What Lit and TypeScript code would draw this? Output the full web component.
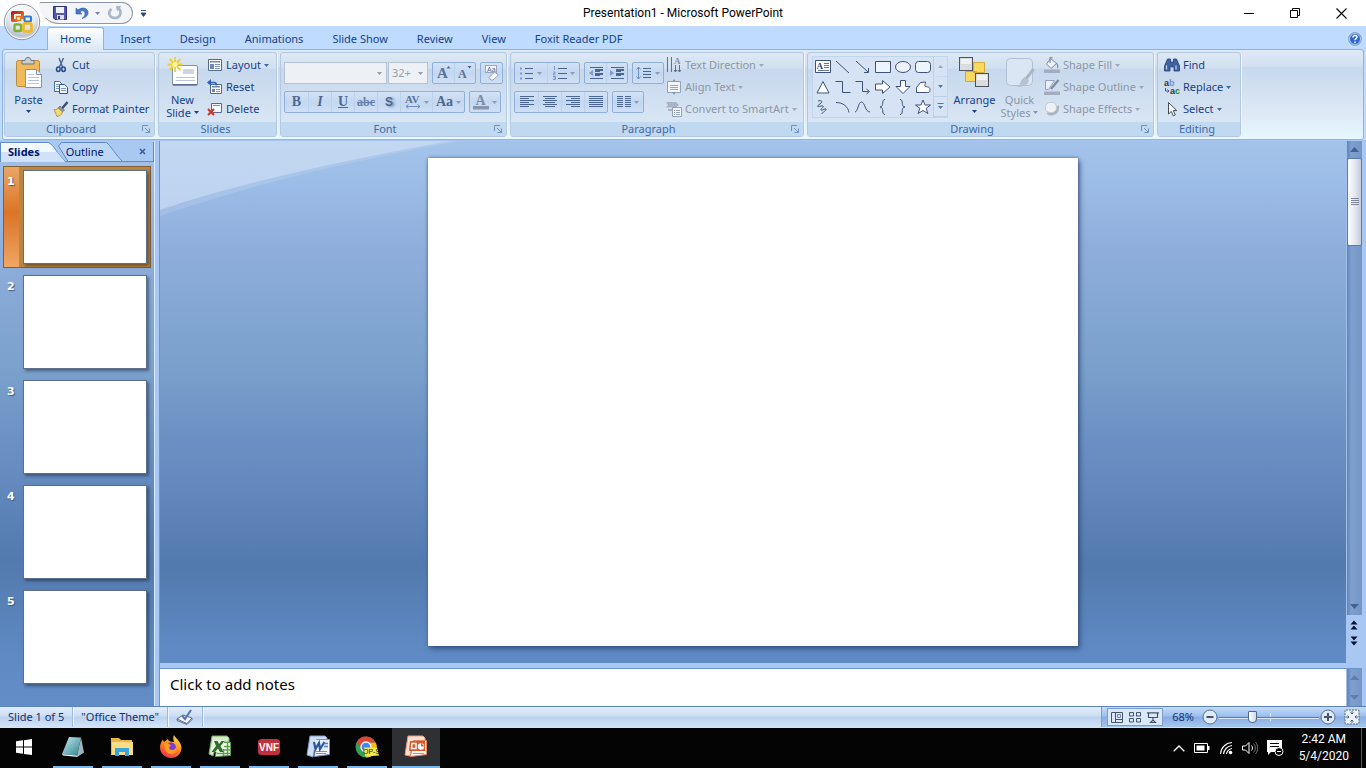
import { LitElement, html, svg, css, nothing } from "lit";
import type { TemplateResult } from "lit";
import { customElement, property, state } from "lit/decorators.js";
import { classMap } from "lit/directives/class-map.js";

const art = (w: number, h: number, body: unknown) =>
  html`<svg width=${w} height=${h} viewBox="0 0 ${w} ${h}" fill="none" aria-hidden="true">${body}</svg>`;

const caret = (color = "currentColor") =>
  html`<svg class="caret" width="5" height="3" viewBox="0 0 5 3" aria-hidden="true"><path d="M0 0h5L2.5 3z" fill=${color} /></svg>`;

const lines = (rows: [number, number, number][], color: string, w = 1) =>
  rows.map(([x, y, len]) => svg`<path d="M${x} ${y}h${len}" stroke=${color} stroke-width=${w} />`);

const ink = "#4a6690";

const icons: Record<string, () => TemplateResult> = {
  office: () => art(38, 38, svg`
    <defs>
      <radialGradient id="orb" cx=".5" cy=".25" r=".8"><stop offset="0" stop-color="#fff"/><stop offset=".5" stop-color="#e6ebf2"/><stop offset=".8" stop-color="#b9c3d2"/><stop offset="1" stop-color="#e9f0f8"/></radialGradient>
      <linearGradient id="ored" x1="0" y1="0" x2="1" y2="1"><stop offset="0" stop-color="#b8200a"/><stop offset="1" stop-color="#f58a1e"/></linearGradient>
    </defs>
    <circle cx="19" cy="19" r="17.7" fill="url(#orb)" stroke="#8a94a4"/>
    <circle cx="19" cy="19" r="16.6" stroke="#fff" stroke-opacity=".8"/>
    <path d="M14.500 17.500H9.500V9.500H19.500V16" stroke="url(#ored)" stroke-width="3" stroke-linejoin="round"/>
    <path d="M13.500 13.500h4v4h-4z" stroke="#e8761e" stroke-width="1.500"/>
    <rect x="21.500" y="13.500" width="6.500" height="5" rx="1" stroke="#2f7fce" stroke-width="2.200"/>
    <rect x="11.500" y="21.500" width="6.500" height="6.500" rx="1" stroke="#7db32c" stroke-width="2.400"/>
    <rect x="20.500" y="20.500" width="8" height="8" rx="1" stroke="#f2b81c" stroke-width="2.600"/>`),
  save: () => art(14, 14, svg`
    <path d="M.5.5h13v13H2L.5 12z" fill="#5a57b0" stroke="#2f2f7c"/><path d="M3 1h8v6H3z" fill="#eef3fb"/>
    <path d="M4 9h7v4.500H4z" fill="#d7dff0"/><path d="M5 10h2v3H5z" fill="#33337c"/>`),
  undo: () => art(14, 14, svg`<path d="M1 2v6h6L5 6c2-2 5-1.500 5 1.500 0 2-1 3.500-3 5 4-1 6-3 6-6 0-4.500-6-6-10-2.500z" fill="#4a78c8" stroke="#2d57a5" stroke-width=".6"/>`),
  redo: () => art(14, 14, svg`<path d="M9.500 1.500c5 3 3.500 10.500-2.500 10.500S-.5 6 3.500 3" stroke="#a9b6c8" stroke-width="2.600"/><path d="M8 0h5.500L9 5.500z" fill="#a9b6c8"/>`),
  customize: () => art(7, 7, svg`<path d="M1 .5h5M1 3h5l-2.500 3.500z" stroke="#2b4678" stroke-width=".9" fill="#2b4678"/>`),
  more: () => art(7, 7, svg`<path d="M.5.5h6" stroke="#57759f"/><path d="M1 3h5l-2.500 3z" fill="#57759f"/>`),
  minimize: () => art(10, 10, svg`<path d="M0 5.500h10" stroke="#000"/>`),
  restore: () => art(10, 10, svg`<path d="M.5 2.500h7v7h-7zM2.500 2.500v-2h7v7h-2" stroke="#000"/>`),
  close: () => art(11, 11, svg`<path d="M.5.5l10 10M10.500.5l-10 10" stroke="#000" stroke-width="1.100"/>`),
  help: () => art(14, 14, svg`
    <circle cx="7" cy="7" r="6.400" fill="#2f68cc" stroke="#8aa6cc"/><circle cx="7" cy="7" r="5.500" stroke="#dbe8fb" stroke-width=".8"/>
    <path d="M5 5.400c0-2.600 4-2.600 4-.3C9 6.600 7 6.600 7 8.300M7 9.500V11" stroke="#fff" stroke-width="1.500"/>`),
  paste: () => art(32, 32, svg`
    <rect x="3.500" y="3.500" width="23" height="26" rx="2" fill="#f0b959" stroke="#b98a3c"/>
    <path d="M9 3.500h3c0-4 6-4 6 0h3V7H9z" fill="#c9ccd2" stroke="#6f7580"/>
    <path d="M12.500 12.500h11l5 5v13h-16z" fill="#fff" stroke="#8494b0"/><path d="M23.500 12.500v5h5" fill="#dfe8f5" stroke="#8494b0"/>
    ${lines([[15, 17.5, 6], [15, 20.5, 11], [15, 23.5, 11], [15, 26.5, 11]], "#b5c2d8")}`),
  cut: () => art(16, 16, svg`
    <path d="M6 1l3.500 9M10.500 1L6.500 10" stroke="#4e6a98" stroke-width="1.500"/>
    <ellipse cx="5.300" cy="12.200" rx="1.800" ry="2.200" stroke="#24498e" stroke-width="1.500"/><ellipse cx="10.500" cy="12.200" rx="1.800" ry="2.200" stroke="#24498e" stroke-width="1.500"/>`),
  copy: () => art(16, 16, svg`
    <path d="M1.500 2.500h5l3 3v7h-8z" fill="#fff" stroke="#4d6da6"/><path d="M6.500 5.500h5l3 3v6h-8z" fill="#eef4fd" stroke="#2f5597"/>
    ${lines([[3, 5.5, 3], [3, 7.500, 3], [3, 9.500, 3], [8, 9.500, 5], [8, 11.500, 5]], "#7d98c8")}`),
  painter: () => art(16, 16, svg`
    <path d="M14.500 1L9 7.500" stroke="#3b4d70" stroke-width="2.400"/><path d="M7 5l4.500 4-2 2L5 7z" fill="#8e97a8" stroke="#5b6576" stroke-width=".6"/>
    <path d="M5 7l4.500 4c-1 3-3 4-5.500 4.500L1 8.500C3 9 4 8.500 5 7z" fill="#f3d873" stroke="#a88a3a" stroke-width=".8"/>`),
  newSlide: () => art(32, 32, svg`
    <rect x="5.500" y="8.500" width="25" height="20" rx="1.500" fill="#fff" stroke="#8191ae"/><path d="M6 27.500h24" stroke="#5d6c88"/>
    <path d="M16 12h11v5H16z" fill="#cfd5e0"/>${lines([[9, 20.500, 19], [9, 23.500, 19]], "#b9c6db")}
    <path d="M8 0v15M.5 7.500h15M2.500 2l11 11M13.500 2l-11 11" stroke="#f2cf25" stroke-width="1.800"/><circle cx="8" cy="7.500" r="2.500" fill="#fff7b0"/>`),
  layout: () => art(16, 16, svg`<path d="M1.500 2.500h13v11h-13z" fill="#fff" stroke="#546a8e"/><path d="M3 4h10v1.500H3zM3 7h4v5H3z" fill="#6f88ad"/>${lines([[8, 7.500, 5], [8, 9.500, 5], [8, 11.500, 5]], "#7d94b8")}`),
  reset: () => art(16, 16, svg`<path d="M3.500 5.500h11v9h-11z" fill="#fff" stroke="#546a8e"/><path d="M5 7h8v1.500H5zM5 10h3v3H5z" fill="#6f88ad"/>${lines([[9, 10.500, 4], [9, 12.500, 4]], "#7d94b8")}<path d="M2 3.500h5c2 0 2.500 1 2.500 3" stroke="#2a62b8" stroke-width="1.700"/><path d="M0 3.500L4 0v7z" fill="#2a62b8"/>`),
  remove: () => art(16, 16, svg`<path d="M4.500 2.500h10v9h-10z" fill="#f6faff" stroke="#546a8e"/><path d="M6 4.500h7" stroke="#7d94b8"/><path d="M1 8l6 6M7 8l-6 6" stroke="#d8321f" stroke-width="2"/>`),
  grow: () => art(14, 18, svg`<text x="0" y="14" font-size="15" class="serif">A</text><path d="M9.500 4.500L11.500 2l2 2.500z" fill=${ink}/>`),
  shrink: () => art(14, 18, svg`<text x="0" y="14" font-size="12" class="serif">A</text><path d="M9.500 2L11.500 4.500l2-2.500z" fill=${ink}/>`),
  clear: () => art(16, 16, svg`<rect x="1.500" y=".5" width="11" height="7" fill="#f4f8fd" stroke="#93a6c4"/><text x="3" y="7" font-size="7" fill=${ink} font-family="Liberation Sans">Aa</text><path d="M5 12.500L10.500 7l4 3-5.500 5H7z" fill="#fff" stroke="#8da0be"/>`),
  spacing: () => art(16, 16, svg`<text x="0" y="9" font-size="11" class="serif">AV</text><path d="M1 12.500h14M3.500 10.500l-2.500 2 2.500 2M12.500 10.500l2.500 2-2.500 2" stroke="#6f8fc4"/>`),
  color: () => art(16, 16, svg`<text x="2.500" y="11" font-size="14" class="serif soft">A</text><path d="M0 12h16v3.500H0z" fill="#8b95a8"/>`),
  bullets: () => art(14, 14, svg`${lines([[5, 2.500, 8], [5, 7.500, 8], [5, 12.500, 8]], ink)}<path d="M0 1.500h2v2H0zM0 6.500h2v2H0zM0 11.500h2v2H0z" fill="#7b9ad0"/>`),
  numbers: () => art(14, 14, svg`${lines([[5, 2.500, 9], [5, 7.500, 9], [5, 12.500, 9]], ink)}<path d="M1.500 0v4M0 6h2v1.500H.5V9H2.500M0 10.500h2.500v3H0M.5 12h2" stroke="#7b9ad0"/>`),
  outdent: () => art(14, 14, svg`${lines([[1, 1.500, 13], [6, 3.500, 8], [6, 5.500, 5], [6, 7.500, 8], [6, 9.500, 5], [1, 12.500, 13]], ink, 1)}${lines([[6, 4.500, 8], [6, 8.500, 8]], ink)}<path d="M4 4L0 7l4 3z" fill="#7b9ad0"/>`),
  indent: () => art(14, 14, svg`${lines([[1, 1.500, 13], [6, 3.500, 8], [6, 5.500, 5], [6, 7.500, 8], [6, 9.500, 5], [1, 12.500, 13]], ink, 1)}${lines([[6, 4.500, 8], [6, 8.500, 8]], ink)}<path d="M0 4l4 3-4 3z" fill="#7b9ad0"/>`),
  lineSpace: () => art(16, 14, svg`${lines([[7, 2.500, 8], [7, 5.500, 8], [7, 8.500, 8], [7, 11.500, 8]], ink)}<path d="M2.500 1v12M.5 3.500l2-2.500 2 2.500M.5 10.500l2 2.500 2-2.500" stroke="#6f8fc4"/>`),
  left: () => art(14, 12, lines([[0, .5, 14], [0, 2.500, 9], [0, 4.500, 14], [0, 6.500, 9], [0, 8.500, 14], [0, 10.500, 9]], ink)),
  center: () => art(14, 12, lines([[0, .5, 14], [2, 2.500, 10], [0, 4.500, 14], [2, 6.500, 10], [0, 8.500, 14], [2, 10.500, 10]], ink)),
  right: () => art(14, 12, lines([[0, .5, 14], [5, 2.500, 9], [0, 4.500, 14], [5, 6.500, 9], [0, 8.500, 14], [5, 10.500, 9]], ink)),
  justify: () => art(14, 12, lines([[0, .5, 14], [0, 2.500, 14], [0, 4.500, 14], [0, 6.500, 14], [0, 8.500, 14], [0, 10.500, 14]], ink)),
  columns: () => art(14, 12, lines([0, 2, 4, 6, 8, 10].flatMap((y) => [[0, y + .5, 6], [8, y + .5, 6]] as [number, number, number][]), ink)),
  direction: () => art(16, 16, svg`<path d="M1.500 0v15M5.500 0v15" stroke="#5d7091"/><text x="8" y="7" font-size="9" class="serif soft">A</text><path d="M9.500 8v7M13.500 8v7M8 13l1.500 2 1.500-2M12 13l1.500 2 1.500-2" stroke="#5d7091"/>`),
  alignText: () => art(16, 16, svg`<path d="M1.500 2.500h13v11h-13z" fill="#f3f7fc" stroke="#93a2ba"/>${lines([[4, 6.500, 8], [4, 8.500, 8], [4, 10.500, 8]], "#9aa8be")}<path d="M6 3l2-3 2 3zM6 13l2 3 2-3z" fill="#8796ae"/>`),
  smartArt: () => art(16, 16, svg`<path d="M0 1h10l3 3-3 2.500H0l2-2.500z" fill="#a9b3c4"/><path d="M2 8h4v2H2z" fill="#a9b3c4"/><path d="M6.500 6.500h9v9h-9z" fill="#f3f7fc" stroke="#93a2ba"/>${lines([[8, 9.500, 1], [10, 9.500, 4], [8, 11.500, 1], [10, 11.500, 4], [8, 13.500, 1], [10, 13.500, 4]], "#93a2ba")}`),
  arrange: () => art(32, 32, svg`
    <path d="M14.500 5.500h11v10h-11zM6.500 14.500h11v10h-11z" fill="#fbd95e" stroke="#d3a93a"/>
    <rect x=".5" y=".5" width="13" height="13" fill="#d9dce0" stroke="#4f5560"/><rect x="16.500" y="16.500" width="13" height="13" fill="#d9dce0" stroke="#4f5560"/><path d="M2 2h10v5H2zM18 18h10v5H18z" fill="#eff1f4"/>`),
  quick: () => art(32, 32, svg`
    <rect x="2.500" y="1.500" width="26" height="27" rx="4" fill="#dbe6f4" stroke="#b4c0d2"/>
    <path d="M29.500 12L22 22" stroke="#a9b4c4" stroke-width="3"/><path d="M21 20l4 3c-1 5-6 7-12 7 4-2 3-8 8-10z" fill="#b7c1cf"/>`),
  fill: () => art(16, 16, svg`<path d="M6.500 1.500l6 5-5.500 5L2.500 7z" fill="#eff3f8" stroke="#7e8ba1"/><path d="M6 6V1.500c0-2 2-2 2 0M12 6c2 1 2 3 1.500 5" stroke="#7e8ba1" stroke-width="1.200"/><path d="M0 12.500h16V16H0z" fill="#a3adbd"/>`),
  outline: () => art(16, 16, svg`<path d="M1.500 1.500h9l-6 9h-3z" fill="#e9eff8" stroke="#93a2ba"/><path d="M14.500 1L7 10" stroke="#7e8ba1" stroke-width="2.200"/><path d="M0 12.500h16V16H0z" fill="#a3adbd"/>`),
  effects: () => art(16, 16, svg`<path d="M3 13c4 3 11 1 12-5V4L3 12z" fill="#aab3c0"/><rect x="1.500" y="1.500" width="11" height="10" rx="4.500" fill="#eef1f5" stroke="#c2cad6"/>`),
  find: () => art(16, 16, svg`<path d="M3.500 2h3v3h3V2h3l3 7v5h-5.500v-4h-4v4H.5V9z" fill="#3f62a2" stroke="#223f78" stroke-width=".8"/><path d="M2.500 8.500v4M12 8.500v4" stroke="#b9cdef" stroke-width="1.300"/>`),
  replace: () => art(16, 16, svg`<text x="0" y="7" font-size="9" font-weight="700" fill="#333" font-family="Liberation Sans">a<tspan fill="#7593c7">b</tspan></text><text x="6" y="15" font-size="9" font-weight="700" fill="#333" font-family="Liberation Sans">a<tspan fill="#1d8a2c">c</tspan></text><path d="M1.500 9v3H5M3.500 10.500L5 12l-1.500 1.500" stroke="#3c5f9f"/>`),
  select: () => art(16, 16, svg`<path d="M4.500 1.500v11.500l2.800-2.600 2 4.500 2-1-2-4.300h3.500z" fill="#fff" stroke="#444c5c"/>`),
  launcher: () => art(8, 8, svg`<path d="M.5 6V.5H6M3 3l4 4M7.500 3.500v4h-4" stroke="#7291bd"/>`),
  closeSmall: () => art(7, 7, svg`<path d="M1 1l5 5M6 1L1 6" stroke="#3d5f96" stroke-width="1.700"/>`),
  spell: () => art(18, 16, svg`<path d="M1 10l6-4 9 3-5 5.500z" fill="#f2f5fa" stroke="#60738f"/><path d="M1 10v1.500l10 4 5-5V9" stroke="#60738f"/><path d="M6 6.500l3 3.500L15 1" stroke="#5573b5" stroke-width="2"/>`),
  viewNormal: () => art(12, 11, svg`<path d="M.5.5h11v10H.5zM4.500.5v10M4.500 7.500h7" stroke="#44546e"/><path d="M6.500 2.500h3v3h-3z" stroke="#7a8aa4"/>`),
  viewSorter: () => art(12, 11, svg`<path d="M.5.5h4v3.500h-4zM7.500.5h4v3.500h-4zM.5 6.500h4V10h-4zM7.500 6.500h4V10h-4z" stroke="#44546e"/>`),
  viewShow: () => art(12, 11, svg`<path d="M0 .8h12M1.500 1v4.500h9V1M6 6v2M3.500 10.500L6 8l2.500 2.500z" stroke="#44546e" stroke-width="1.200"/>`),
  minus: () => art(16, 16, svg`<circle cx="8" cy="8" r="7" fill="#dfe9f8" stroke="#5b6f90"/><path d="M4.500 8h7" stroke="#44546e" stroke-width="2"/>`),
  plus: () => art(16, 16, svg`<circle cx="8" cy="8" r="7" fill="#dfe9f8" stroke="#5b6f90"/><path d="M4 8h8M8 4v8" stroke="#44546e" stroke-width="2"/>`),
  fit: () => art(16, 16, svg`<rect x="1" y="1" width="14" height="14" rx="1" fill="#eaf2fd" stroke="#51637f" stroke-dasharray="2 1"/><path d="M8 2v3M8 11v3M2 8h3M11 8h3M6.500 3.500L8 5l1.500-1.500M6.500 12.500L8 11l1.500 1.500M3.500 6.500L5 8 3.500 9.500M12.500 6.500L11 8l1.500 1.500" stroke="#44546e" stroke-width=".9"/>`),
  arrowUp: () => art(9, 5, svg`<path d="M0 5h9L4.500 0z" fill="#44618f"/>`),
  arrowDown: () => art(9, 5, svg`<path d="M0 0h9L4.500 5z" fill="#44618f"/>`),
  pageUp: () => art(8, 10, svg`<path d="M.5 4.500h7L4 .5zM.5 9.500h7L4 5.500z" fill="#0a1230"/>`),
  pageDown: () => art(8, 10, svg`<path d="M.5.5h7L4 4.500zM.5 5.500h7L4 9.500z" fill="#0a1230"/>`),
  start: () => art(16, 16, svg`<path d="M0 2.300L7 1.300V7.600H0zM8 1.200L16 0V7.600H8zM0 8.500H7V14.800L0 13.800zM8 8.500H16V16L8 14.900z" fill="#fff"/>`),
  notes: () => art(24, 24, svg`<defs><linearGradient id="np" x1="0" y1="0" x2="1" y2="1"><stop offset="0" stop-color="#c5eef2"/><stop offset="1" stop-color="#2f8090"/></linearGradient></defs><path d="M8 2l12 .5-4 18L1 19z" fill="url(#np)"/><path d="M20 2.500l3 15-6 4-1-1z" fill="#9eb4ba"/><path d="M1 19l15 1.500 1 1.500-15-1.500z" fill="#e8eef0"/>`),
  explorer: () => art(24, 24, svg`<path d="M1 3h8l2 2h11v15H1z" fill="#e9b64a"/><path d="M2 7h21v13H2z" fill="#fbdc85"/><path d="M5 13h14v8h-4v-4h-6v4H5z" fill="#35a6e0"/>`),
  firefox: () => art(24, 24, svg`<defs><linearGradient id="ff" x1=".8" y1="0" x2=".3" y2="1"><stop offset="0" stop-color="#ffe14a"/><stop offset=".5" stop-color="#ff8a1e"/><stop offset="1" stop-color="#f0304c"/></linearGradient></defs><path d="M15 0c1 3 7 6 7.500 12.500C22.500 19 17.500 23 12 23S1 18.500 1 12.500C1 9 2.500 6.500 4 4.500L5 7l4-3c0 1 .5 2 2 2.500L15 7c-1-3-1-5 0-7z" fill="url(#ff)"/><circle cx="12" cy="12.500" r="5" fill="#7a3fd0"/><path d="M5 9c3-2 6 0 7 2-3 0-2 4 1 4 2 0 4-1 4-3 1 5-2 7-5 7-4 0-7-4-7-10z" fill="#ff9a26"/>`),
  excel: () => art(24, 24, svg`<path d="M4 1h15l2 2v4H9l-4 14-4-2z" fill="#d5ebc9" stroke="#6fae5c"/><path d="M9.500 7.500h13v13l-15 1z" fill="#fff" stroke="#5da04a"/><path d="M5 5h11v12H3z" fill="#e9f5e2"/><path d="M16 11.500h6M16 15h6M9 18.500h13M15.500 14v7M19.500 8v13" stroke="#5da04a" stroke-width="1.500"/><path d="M6 6h3.500l1.500 3 2.500-3h3l-4 5 3 6h-3.500l-2-3.500-3 3.500H3.500L8 11z" fill="#2c6e2a"/>`),
  vnf: () => art(24, 24, svg`<rect x="1" y="4" width="22" height="16" rx="3.500" fill="#c2303c"/><text x="12" y="16" font-size="10" font-weight="700" text-anchor="middle" fill="#fff" font-family="Liberation Sans">VNF</text>`),
  word: () => art(24, 24, svg`<path d="M4 1h15l2 2v3H10L7 22l-6-2z" fill="#cfdef4" stroke="#7d9dd2"/><path d="M10.500 4.500h13v15l-15 2z" fill="#f4f8fd" stroke="#6f93cc"/>${lines([[10, 16.500, 11], [10, 18.500, 10]], "#6f93cc")}<path d="M9 5h13v10H8z" fill="#e3ecf9"/><path d="M8 7l1.500 7L13 8l1 6 4.500-7" stroke="#2b579a" stroke-width="2.200"/><path d="M18 8.500h4M18 11.500h4" stroke="#5b80bd" stroke-width="1.300"/>`),
  chrome: () => art(24, 24, svg`<circle cx="11" cy="12" r="10.500" fill="#34a053"/><path d="M21.200 8.500A10.500 10.500 0 0 1 11 22.500L15.500 14 14 7.500h6z" fill="#fbbc05"/><path d="M1.900 6.750A10.500 10.500 0 0 1 20.500 7.500H11L6.500 14z" fill="#e04535"/><circle cx="11" cy="12" r="5" fill="#4285f4" stroke="#fff" stroke-width="1.300"/><path d="M9 12.500h13l2 8-14 1z" fill="#f4e84a"/><text x="8" y="19" font-size="7" fill="#222" font-family="Liberation Sans">OP-S</text>`),
  powerpoint: () => art(24, 24, svg`<path d="M4 1h15l2 2v3H9L6 21l-5-1z" fill="#fde0d0" stroke="#e89a78"/><path d="M9.500 5.500h13v14l-16 2z" fill="#fff5ef" stroke="#e48a62"/><path d="M6 6h15v10H5z" fill="#d9572c"/><path d="M8 8.500h4v5H7.500z" stroke="#fff" stroke-width="1.500"/><circle cx="17" cy="11.500" r="3.200" fill="#fff"/><path d="M17 11.500V8l3.500 3.500z" fill="#d9572c"/><path d="M9 18.500h11" stroke="#e48a62"/>`),
  chevron: () => art(12, 7, svg`<path d="M.7 6.300L6 1l5.300 5.300" stroke="#fff" stroke-width="1.300"/>`),
  battery: () => art(16, 10, svg`<path d="M.5.500h13v9H.5z" stroke="#fff"/><path d="M2.500 2.500h8v5h-8zM14 3h1.500v4H14z" fill="#fff"/>`),
  wifi: () => art(14, 14, svg`<path d="M1.500 13C2 6.500 6.500 2 13 1.500M4.500 13C5 8.500 8.500 5 13 4.500M7.500 13c.3-2.700 2.800-5.200 5.500-5.500" stroke="#fff" stroke-width="1.100"/><circle cx="11.500" cy="11.500" r="1.800" fill="#fff"/>`),
  sound: () => art(16, 14, svg`<path d="M.5 5h3L7 1.500v11L3.500 9h-3z" stroke="#fff"/><path d="M9.500 4.500c1.300 1.500 1.300 3.500 0 5" stroke="#fff"/><path d="M11.500 2.500c2.400 2.500 2.400 6.500 0 9M13.500 1c3 3.500 3 8.500 0 12" stroke="#777"/>`),
  notify: () => art(17, 16, svg`<path d="M0 0h15v9l-4 3H4l-3 3v-3H0z" fill="#fff"/>${lines([[3, 3.500, 9], [3, 6.500, 9]], "#000")}<circle cx="12" cy="11.500" r="4" fill="#000" stroke="#fff"/><path d="M10 11.500h4" stroke="#fff"/>`),
};

const shapes: TemplateResult[] = [
  svg`<path d="M.5 1.500h15v12H.5z" fill="#fff"/><text x="1.500" y="10" font-size="9" font-weight="700" fill="#2b4678" stroke="none" font-family="Liberation Serif">A</text><path d="M9 4.500h5M9 6.500h5M9 8.500h5M3 11.500h11" stroke-width=".8"/>`,
  svg`<path d="M1 2l13 12"/>`,
  svg`<path d="M1 2l12 11M13.500 9v4.500H9"/>`,
  svg`<path d="M.5 2.500h15v11H.5z" fill="#eef4fc"/>`,
  svg`<ellipse cx="8" cy="8" rx="7.500" ry="5.500" fill="#eef4fc"/>`,
  svg`<rect x=".5" y="2.500" width="15" height="11" rx="3" fill="#eef4fc"/>`,
  svg`<path d="M8 2.500l6 11.500H2z" fill="#fff"/>`,
  svg`<path d="M.5 2.500h7v11h8"/>`,
  svg`<path d="M.5 2.500h7v10h6M11.500 10l3 2.500-3 2.500"/>`,
  svg`<path d="M.5 5h7V1.500l7.500 6.500-7.500 6.500V11h-7z" fill="#fff"/>`,
  svg`<path d="M5.500 1.500h5v6H15l-7 7-7-7h4.500z" fill="#fff"/>`,
  svg`<path d="M1.500 13.500v-5l4-5 5-.5c0 2-1.500 4 0 4.500s4.500 0 4.500 3-1 3-3 3z" fill="#fff"/>`,
  svg`<path d="M3 2c3-1 5 0 3 2L2.500 7c0 2 4-1 5.500 0S5 10 6 11s4-2 5-1-3 3-4.500 5"/>`,
  svg`<path d="M1 3.500c7 0 12 4 13 10"/>`,
  svg`<path d="M0 13C3 13 3 3 6.500 3S10 13 15 13"/>`,
  svg`<path d="M10 .5c-4 0-.5 7.500-5 7.500 4.500 0 1 7.500 5 7.500"/>`,
  svg`<path d="M5 .5c4 0 .5 7.500 5 7.500-4.500 0-1 7.500-5 7.500"/>`,
  svg`<path d="M8 1l2 5h5.500l-4.300 3.300 1.700 5.200L8 11.500l-4.900 3 1.700-5.200L.5 6H6z" fill="#fff"/>`,
];

interface Command { icon: string; label: string; menu?: boolean; off?: boolean }

const clipboardCommands: Command[] = [
  { icon: "cut", label: "Cut" }, { icon: "copy", label: "Copy" }, { icon: "painter", label: "Format Painter" },
];
const slideCommands: Command[] = [
  { icon: "layout", label: "Layout", menu: true }, { icon: "reset", label: "Reset" }, { icon: "remove", label: "Delete" },
];
const textCommands: Command[] = [
  { icon: "direction", label: "Text Direction", menu: true, off: true },
  { icon: "alignText", label: "Align Text", menu: true, off: true },
  { icon: "smartArt", label: "Convert to SmartArt", menu: true, off: true },
];
const shapeCommands: Command[] = [
  { icon: "fill", label: "Shape Fill", menu: true, off: true },
  { icon: "outline", label: "Shape Outline", menu: true, off: true },
  { icon: "effects", label: "Shape Effects", menu: true, off: true },
];
const editCommands: Command[] = [
  { icon: "find", label: "Find" }, { icon: "replace", label: "Replace", menu: true }, { icon: "select", label: "Select", menu: true },
];

const shared = css`
  * { box-sizing: border-box; }
  button, select, input, textarea { font: inherit; color: inherit; margin: 0; padding: 0; border: 0; background: none; border-radius: 0; outline: none; }
  button { display: flex; align-items: center; justify-content: center; white-space: nowrap; }
  svg { display: block; flex: none; }
`;

@customElement("ribbon-bar")
export class RibbonBar extends LitElement {
  static styles = [shared, css`
    :host { display: block; padding: 0 2px; background: #bfdbff; color: #15428b; }
    .bar { display: flex; gap: 3px; height: 91px; padding: 2px 1px; border: 1px solid #8db2e3; border-radius: 3px; background: linear-gradient(#dfe9f5, #d3e1f1 18%, #c8d9ed 20%, #dbe7f4 65%, #e3f3fc 90%, #e8f8fe); }
    .group { display: flex; flex-direction: column; flex: none; border: 1px solid #b3c9e0; border-radius: 3px; box-shadow: 1px 1px 0 #eef6fd; background: linear-gradient(#dde8f5, #d2e0f0 18%, #c7d8ed 20%, #d9e6f4 85%); overflow: hidden; }
    .clipboard { width: 151px; }
    .slides { width: 119px; }
    .font { width: 227px; }
    .paragraph { width: 294px; }
    .drawing { width: 347px; }
    .editing { width: 84px; }
    .body { display: flex; flex: 1; padding: 1px 0 0 1px; min-height: 0; }
    .editing .body { padding-left: 4px; }
    .caption { display: flex; align-items: center; height: 14px; padding-right: 4px; background: #c1d8f1; color: #3e6aaa; }
    .caption span { flex: 1; text-align: center; }
    .caption button { margin-left: 5px; }
    .big { flex-direction: column; justify-content: flex-start; width: 45px; padding-top: 3px; line-height: 13px; }
    .big .word { margin-top: 4px; }
    .big .line { display: flex; align-items: center; gap: 3px; }
    .big .caret { margin-top: 4px; }
    .big .line .caret { margin: 0; }
    .stack { display: flex; flex-direction: column; padding-left: 2px; }
    .cmd { height: 22px; gap: 3px; justify-content: flex-start; }
    .cmd .caret, .tool .caret { opacity: .75; }
    .off { color: #8d97a5; }
    .rows { display: flex; flex-direction: column; gap: 7px; padding: 8px 0 0 2px; }
    .row { display: flex; gap: 4px; }
    .tools { display: flex; height: 22px; border: 1px solid #8fb0dc; border-radius: 2px; background: linear-gradient(#d3e2f4, #c3d7f0 50%, #cfe0f5); color: #7b8ba4; }
    .tool { width: 21px; gap: 3px; }
    .tool + .tool { border-left: 1px solid #bcd1ec; }
    .tool.menu { width: 32px; }
    .tool.menu:only-child { width: 30px; }
    .tool.wide { width: 23px; }
    .serif { font-family: "Liberation Serif", serif; font-weight: 700; fill: #5a7199; }
    .soft { fill: #7d8ca6; }
    .glyph { font: 700 14px/20px "Liberation Serif", serif; color: #4f6890; }
    .italic { font-style: italic; }
    .under { text-decoration: underline; }
    .strike { font-size: 12px; text-decoration: line-through; color: #6580ab; }
    .shadow { font-family: "Liberation Sans", sans-serif; font-size: 12px; text-shadow: 2px 1px 2px #7d93b8; }
    .pick { display: grid; height: 22px; border: 1px solid #b4c3d6; background: #edf1f6; color: #949eac; align-items: center; }
    .pick select, .pick .caret { grid-area: 1 / 1; }
    .pick select { appearance: none; width: 100%; padding-left: 3px; opacity: 1; }
    .pick .caret { justify-self: end; margin-right: 4px; }
    .family { width: 103px; margin-right: -3px; }
    .size { width: 40px; }
    .gallery { display: flex; margin: 2px 4px 0 3px; height: 62px; border: 1px solid #c3d5ea; background: #d5e3f5; }
    .shapes { display: grid; grid-template-columns: repeat(6, 20px); grid-auto-rows: 20px; }
    .shape svg { stroke: #3d5278; }
    .scroll { display: flex; flex-direction: column; width: 14px; border-left: 1px solid #bccfe6; }
    .scroll button { flex: 1; border-bottom: 1px solid #bccfe6; color: #57759f; }
    .dim { opacity: .5; }
  `];

  private caption(text: string, launcher = true) {
    return html`<div class="caption"><span>${text}</span>${launcher ? html`<button aria-label="${text} options">${icons.launcher()}</button>` : nothing}</div>`;
  }
  private stack(items: Command[]) {
    return html`<div class="stack">${items.map((c) => html`
      <button class=${classMap({ cmd: true, off: !!c.off })}>${icons[c.icon]()}<span>${c.label}</span>${c.menu ? caret() : nothing}</button>`)}</div>`;
  }
  private tool(content: unknown, label: string, cls = "") {
    return html`<button class="tool ${cls}" aria-label=${label}>${content}${cls === "menu" ? caret() : nothing}</button>`;
  }

  render() {
    const t = this.tool.bind(this);
    return html`<div class="bar">
      <section class="group clipboard">
        <div class="body"><button class="big">${icons.paste()}<span class="word">Paste</span>${caret()}</button>${this.stack(clipboardCommands)}</div>
        ${this.caption("Clipboard")}
      </section>
      <section class="group slides">
        <div class="body"><button class="big">${icons.newSlide()}<span class="word">New</span><span class="line">Slide ${caret()}</span></button>${this.stack(slideCommands)}</div>
        ${this.caption("Slides", false)}
      </section>
      <section class="group font">
        <div class="body"><div class="rows">
          <div class="row">
            <label class="pick family"><select aria-label="Font"><option></option></select>${caret()}</label>
            <label class="pick size"><select aria-label="Font size"><option>32+</option></select>${caret()}</label>
            <div class="tools">${t(icons.grow(), "Grow font")}${t(icons.shrink(), "Shrink font")}</div>
            <div class="tools">${t(icons.clear(), "Clear formatting")}</div>
          </div>
          <div class="row">
            <div class="tools">
              ${t(html`<span class="glyph">B</span>`, "Bold", "wide")}${t(html`<span class="glyph italic">I</span>`, "Italic", "wide")}
              ${t(html`<span class="glyph under">U</span>`, "Underline", "wide")}${t(html`<span class="glyph strike">abc</span>`, "Strikethrough", "wide")}
              ${t(html`<span class="glyph shadow">S</span>`, "Shadow", "wide")}${t(icons.spacing(), "Character spacing", "menu")}
              ${t(html`<span class="glyph">Aa</span>`, "Change case", "menu")}
            </div>
            <div class="tools">${t(icons.color(), "Font color", "menu")}</div>
          </div>
        </div></div>
        ${this.caption("Font")}
      </section>
      <section class="group paragraph">
        <div class="body">
          <div class="rows">
            <div class="row">
              <div class="tools">${t(icons.bullets(), "Bullets", "menu")}${t(icons.numbers(), "Numbering", "menu")}</div>
              <div class="tools">${t(icons.outdent(), "Decrease level")}${t(icons.indent(), "Increase level")}</div>
              <div class="tools">${t(icons.lineSpace(), "Line spacing", "menu")}</div>
            </div>
            <div class="row">
              <div class="tools">${t(icons.left(), "Align left", "wide")}${t(icons.center(), "Center", "wide")}${t(icons.right(), "Align right", "wide")}${t(icons.justify(), "Justify", "wide")}</div>
              <div class="tools">${t(icons.columns(), "Columns", "menu")}</div>
            </div>
          </div>
          ${this.stack(textCommands)}
        </div>
        ${this.caption("Paragraph")}
      </section>
      <section class="group drawing">
        <div class="body">
          <div class="gallery">
            <div class="shapes">${shapes.map((s) => html`<button class="shape" aria-label="Shape">${art(16, 16, s)}</button>`)}</div>
            <div class="scroll"><button class="dim" aria-label="Up"><svg width="5" height="3" viewBox="0 0 5 3"><path d="M0 3h5L2.500 0z" fill="#57759f" /></svg></button><button aria-label="Down">${caret()}</button><button aria-label="More">${icons.more()}</button></div>
          </div>
          <button class="big">${icons.arrange()}<span class="word">Arrange</span>${caret()}</button>
          <button class="big off">${icons.quick()}<span class="word">Quick</span><span class="line">Styles ${caret()}</span></button>
          ${this.stack(shapeCommands)}
        </div>
        ${this.caption("Drawing")}
      </section>
      <section class="group editing">
        <div class="body">${this.stack(editCommands)}</div>
        ${this.caption("Editing", false)}
      </section>
    </div>`;
  }
}

@customElement("scroll-strip")
export class ScrollStrip extends LitElement {
  @property({ type: Boolean }) thumb = false;
  static styles = [shared, css`
    :host { display: flex; flex-direction: column; justify-content: space-between; width: 16px; background: linear-gradient(90deg, #6285b9, #7fa0cf 30%, #7595c6); border-left: 1px solid #9fbfe8; }
    .arrow { height: 17px; }
    .head { display: flex; flex-direction: column; }
    .grip { display: flex; align-items: center; justify-content: center; height: 88px; border: 1px solid #5c79a8; border-radius: 2px; background: linear-gradient(90deg, #fbfcfe, #e6e9f1 50%, #c5cbdb); }
    .faded { opacity: .5; }
  `];
  render() {
    const cls = { arrow: true, faded: !this.thumb };
    return html`<div class="head"><button class=${classMap(cls)} aria-label="Scroll up">${icons.arrowUp()}</button>
      ${this.thumb ? html`<div class="grip">${art(8, 8, lines([[0, .5, 8], [0, 2.5, 8], [0, 4.5, 8], [0, 6.5, 8]], "#7e8798"))}</div>` : nothing}</div>
      <button class=${classMap(cls)} aria-label="Scroll down">${icons.arrowDown()}</button>`;
  }
}

@customElement("app-root")
export class AppRoot extends LitElement {
  @state() private current = 1;
  @state() private tab = "Home";

  static styles = [shared, css`
    :host { display: flex; flex-direction: column; height: 100vh; overflow: hidden; position: relative; font: 11px/14px "Noto Sans", "Open Sans", sans-serif; color: #15428b; background: #bfdbff; }
    .title { display: grid; grid-template-columns: 1fr auto 1fr; align-items: center; height: 26px; background: #fff; color: #000; font: 12px/16px Roboto, sans-serif; }
    .quick { display: flex; align-items: center; gap: 7px; padding-left: 39px; }
    .pill { display: flex; align-items: center; width: 94px; height: 22px; padding-left: 13px; border: 1px solid #8f98a6; border-left-color: transparent; border-radius: 2px 12px 12px 22px; background: #f3f5f9; }
    .pill button + button { margin-left: 8px; }
    .pill .drop { margin-left: 6px; }
    .orb { position: absolute; left: 3px; top: 3px; z-index: 1; }
    .windows { display: flex; justify-content: flex-end; padding-right: 2px; }
    .windows button { width: 46px; height: 26px; }
    .tabs { display: flex; align-items: stretch; gap: 3px; height: 24px; padding: 1px 4px 0 47px; margin-bottom: -1px; z-index: 1; }
    .tab { padding: 0 12px; border: 1px solid transparent; border-bottom: 0; }
    .tab.on { border-color: #8db2e3; border-radius: 3px 3px 0 0; background: linear-gradient(#fff, #e7f0fb 60%, #dfe9f5); }
    .help { margin-left: auto; }
    .work { display: flex; flex: 1; min-height: 0; padding: 1px 4px 0 0; background: #a9c7f3; }
    .side { display: flex; flex-direction: column; width: 155px; position: relative; overflow: hidden; border-right: 1px solid #d9ecff; background: linear-gradient(#a4c3ea, #9cbde7 7%, #90aedb 19%, #7ba1cd 40%, #688ec2 56%, #537aae 74%, #5f8ac4 92%, #628dc7); }
    .panes { display: flex; align-items: center; height: 21px; position: relative; color: #1a3a7c; }
    .panes .bg { position: absolute; left: 0; top: 0; }
    .panes button { position: relative; }
    .pane { margin-left: 8px; font-weight: 700; color: #00156e; }
    .pane + .pane { margin-left: 26px; font-weight: 400; }
    .panes .shut { margin: 0 8px 0 auto; }
    .thumbs { display: flex; flex-direction: column; gap: 3px; margin: 0; padding: 4px 3px; list-style: none; }
    .thumb { display: flex; width: 148px; height: 102px; padding: 3px; border: 1px solid transparent; align-items: stretch; justify-content: flex-start; }
    .thumb.on { border-color: #84602e; background: linear-gradient(90deg, transparent 15px, #b98646 15px), linear-gradient(#e8a668, #dd7424 45%, #df8038 60%, #f0a862); }
    .num { width: 16px; padding-top: 5px; text-align: left; font: 700 11px/14px "DejaVu Sans", sans-serif; color: #fff; text-shadow: 1px 1px 1px #38598c; }
    .paper { flex: 1; border: 1px solid #5c6f8f; background: #fff; box-shadow: 2px 2px 3px #0006; }
    .main { display: flex; flex-direction: column; flex: 1; min-width: 0; margin-left: 4px; border-left: 1px solid #6d94cc; }
    .stage { display: flex; flex: 1; min-height: 0; }
    .canvas { display: flex; justify-content: center; flex: 1; position: relative; padding: 17px; overflow: hidden; background: linear-gradient(#a4c3ea, #9cbde7 8%, #90aedb 20%, #7ba1cd 42%, #688ec2 60%, #5a80b5 75%, #537aae 81%, #5f8ac4 98%); }
    .wave { position: absolute; left: 0; top: 0; }
    .slide { position: relative; height: 100%; aspect-ratio: 650 / 488; background: #fff; box-shadow: 2px 3px 5px #1c355f99, 0 0 3px #4a6ea5; }
    .rail { display: flex; flex-direction: column; }
    .rail scroll-strip { flex: 1; }
    .jump { display: flex; flex-direction: column; align-items: center; gap: 6px; height: 48px; padding-top: 5px; background: #a9c7f3; }
    .foot { display: flex; height: 38px; margin-top: 5px; border-top: 1px solid #6d94cc; }
    .foot textarea { flex: 1; resize: none; padding: 5px 10px; background: #fff; color: #000; font-size: 15px; line-height: 20px; }
    .status { display: flex; height: 22px; padding-bottom: 1px; border-top: 1px solid #5b83bd; color: #15306e; background: linear-gradient(#e2edfb, #cddff5 40%, #bcd2ee 50%, #d4e5fa); }
    .cell { display: flex; align-items: center; padding: 0 8px; border-right: 1px solid #9ab8e0; box-shadow: 1px 0 0 #f0f6fe; }
    .zoomer { display: flex; align-items: center; gap: 6px; margin-left: auto; padding: 0 6px 0 5px; border-left: 1px solid #7b9fd2; background: linear-gradient(#c5dbf8, #9dc0ee 45%, #87aee2 50%, #a5c5f0); }
    .views { display: flex; height: 18px; border: 1px solid #7c9dca; background: #dbe8f9; }
    .views button { width: 18px; }
    .pct { margin: 0 2px 0 3px; }
    .track { width: 100px; height: 16px; appearance: none; background: linear-gradient(#5f7ca8, #5f7ca8) 0 8px / 100% 1px no-repeat, linear-gradient(#dbe8fa, #dbe8fa) 0 9px / 100% 1px no-repeat, linear-gradient(#dbe8fa, #dbe8fa) 52% 4px / 1px 8px no-repeat; }
    .track::-webkit-slider-thumb { appearance: none; width: 9px; height: 12px; border: 1px solid #51668a; border-radius: 1px 1px 4px 4px; background: linear-gradient(90deg, #fff, #c9d8ee); }
    .zoomer .track { margin: 0 -5px; }
    .zoomer .in { margin-right: 2px; }
    .taskbar { display: flex; gap: 1px; height: 40px; background: #040405; color: #fff; }
    .app { width: 48px; border-bottom: 2px solid transparent; position: relative; }
    .app.run::after { content: ""; position: absolute; left: 4px; right: 4px; bottom: -2px; height: 2px; background: #76b9ed; }
    .app.on { background: #2f3033; }
    .app.on::after { left: 0; right: 0; }
    .tray { display: flex; align-items: center; margin-left: auto; gap: 9px; }
    .clock { padding: 3px 12px 0 6px; margin-right: 4px; text-align: center; font: 12px/17px Roboto, sans-serif; border-right: 1px solid #55585c; align-self: stretch; }
  `];

  render() {
    const tabs = ["Home", "Insert", "Design", "Animations", "Slide Show", "Review", "View", "Foxit Reader PDF"];
    const apps = ["notes", "explorer", "firefox", "excel", "vnf", "word", "chrome", "powerpoint"];
    return html`
      <button class="orb" aria-label="Office menu">${icons.office()}</button>
      <header class="title">
        <div class="quick">
          <div class="pill"><button aria-label="Save">${icons.save()}</button><button aria-label="Undo">${icons.undo()}</button><button class="drop" aria-label="Undo list">${caret("#6d88b5")}</button><button aria-label="Redo">${icons.redo()}</button></div>
          <button aria-label="Customize">${icons.customize()}</button>
        </div>
        <span>Presentation1 - Microsoft PowerPoint</span>
        <div class="windows">${["minimize", "restore", "close"].map((n) => html`<button aria-label=${n}>${icons[n]()}</button>`)}</div>
      </header>
      <nav class="tabs">
        ${tabs.map((n) => html`<button class=${classMap({ tab: true, on: n === this.tab })} @click=${() => (this.tab = n)}>${n}</button>`)}
        <button class="help" aria-label="Help">${icons.help()}</button>
      </nav>
      <ribbon-bar></ribbon-bar>
      <div class="work">
        <aside class="side">
          <div class="panes">
            <svg class="bg" width="154" height="21" viewBox="0 0 154 21" aria-hidden="true">
              <path d="M0 0h154v21H0z" fill="#a9c9f2" /><path d="M153.500 1v20M0 20.500h154" stroke="#5f8ac6" />
              <path d="M58.500 5l3-3.500h45c4 3 9 12 16 19H68z" fill="#bcd6f7" stroke="#5f8ac6" />
              <path d="M.5 21V1.500h48c6 3 9 12 17 19.500z" fill="#f2f8ff" stroke="#5f8ac6" /><path d="M1 11h56l8 10H1z" fill="#cfe2fa" />
            </svg>
            <button class="pane">Slides</button><button class="pane">Outline</button><button class="shut" aria-label="Close pane">${icons.closeSmall()}</button>
          </div>
          <ol class="thumbs">${[1, 2, 3, 4, 5].map((n) => html`<li><button class=${classMap({ thumb: true, on: n === this.current })} @click=${() => (this.current = n)}><span class="num">${n}</span><span class="paper"></span></button></li>`)}</ol>
        </aside>
        <main class="main">
          <div class="stage">
            <div class="canvas">
              <svg class="wave" width="330" height="80" viewBox="0 0 330 80" aria-hidden="true">
                <path d="M0 0H300C190 20 90 44 0 75z" fill="#fff" opacity=".12" /><path d="M0 0H290C180 20 80 42 0 69z" fill="#d5e5f8" opacity=".5" />
              </svg>
              <div class="slide"></div>
            </div>
            <div class="rail"><scroll-strip thumb></scroll-strip><div class="jump"><button aria-label="Previous slide">${icons.pageUp()}</button><button aria-label="Next slide">${icons.pageDown()}</button></div></div>
          </div>
          <div class="foot"><textarea aria-label="Notes" .value=${"Click to add notes"}></textarea><scroll-strip></scroll-strip></div>
        </main>
      </div>
      <footer class="status">
        <span class="cell">Slide 1 of 5</span><span class="cell">"Office Theme"</span><button class="cell" aria-label="Spelling">${icons.spell()}</button>
        <div class="zoomer">
          <div class="views">${["viewNormal", "viewSorter", "viewShow"].map((n) => html`<button aria-label=${n}>${icons[n]()}</button>`)}</div>
          <span class="pct">68%</span>
          <button aria-label="Zoom out">${icons.minus()}</button>
          <input class="track" type="range" aria-label="Zoom" min="0" max="100" value="32" />
          <button class="in" aria-label="Zoom in">${icons.plus()}</button>
          <button aria-label="Fit to window">${icons.fit()}</button>
        </div>
      </footer>
      <div class="taskbar">
        <button class="app" aria-label="Start">${icons.start()}</button>
        ${apps.map((n) => html`<button class=${classMap({ app: true, run: true, on: n === "powerpoint" })} aria-label=${n}>${icons[n]()}</button>`)}
        <div class="tray">${["chevron", "battery", "wifi", "sound", "notify"].map((n) => html`<button aria-label=${n}>${icons[n]()}</button>`)}
          <div class="clock">2:42 AM<br />5/4/2020</div></div>
      </div>`;
  }
}
